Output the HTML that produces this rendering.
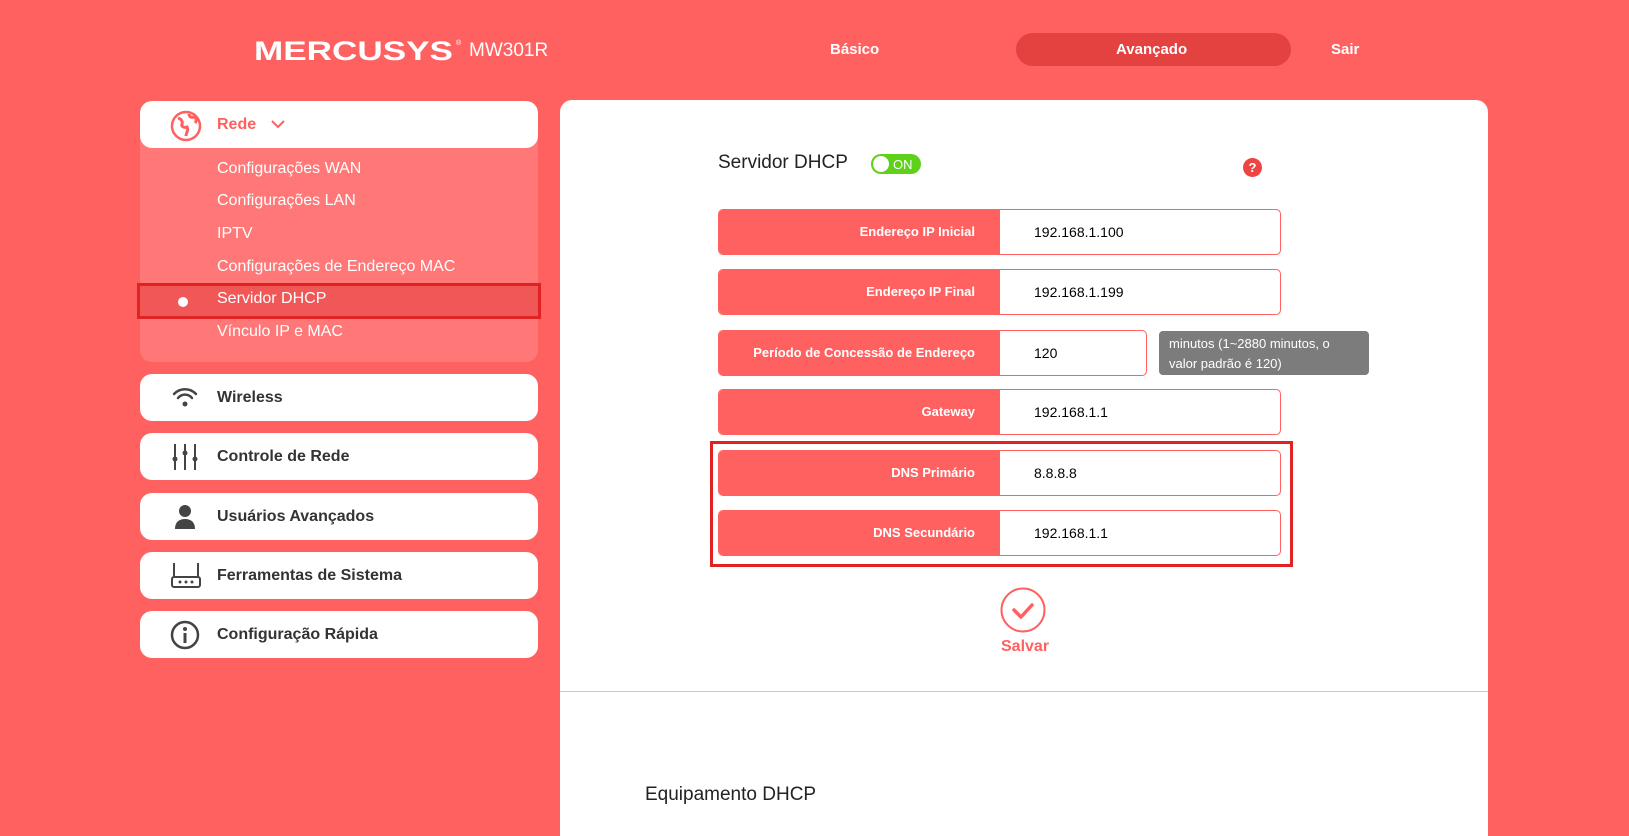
<!DOCTYPE html>
<html><head><meta charset="utf-8">
<style>
*{margin:0;padding:0;box-sizing:border-box}
html{width:1629px;height:836px;overflow:hidden}
body{width:1629px;height:836px;overflow:hidden;background:#ff6161;font-family:"Liberation Sans",Arial,sans-serif;position:relative}
.abs{position:absolute}
.logo{left:254px;top:36px;font-size:27px;font-weight:900;color:#fff;transform:scaleX(1.3);transform-origin:left;font-family:"Liberation Sans",sans-serif}
.model{left:469px;top:40px;font-size:19px;color:#fff}
.nav{color:#fff;font-weight:bold;font-size:15px;top:41px}
.pill{left:1016px;top:33px;width:275px;height:33px;border-radius:17px;background:#e44141}
.card{background:#fff;border-radius:12px;left:140px;width:398px;height:47px}
.card span{position:absolute;left:77px;top:15px;font-size:16px;font-weight:bold;color:#333}
.card svg{position:absolute;left:30px;top:9px}
.sub{left:140px;top:130px;width:398px;height:232px;background:#ff7777;border-radius:0 0 12px 12px}
.si{left:217px;font-size:16px;color:#fff}
.main{left:560px;top:100px;width:928px;height:736px;background:#fff;border-radius:12px 12px 0 0}
.row{left:718px;width:563px;height:46px;border:1px solid #ff6161;border-radius:5px;overflow:hidden;background:#fff}
.row .lb{position:absolute;left:0;top:0;width:281px;height:100%;background:#ff6161;color:#fff;font-weight:bold;font-size:13px;text-align:right;padding-right:25px;line-height:44px}
.row .v{position:absolute;left:315px;top:0;line-height:44px;font-size:14px;color:#000}
</style></head><body>
<div class="abs logo">MERCUSYS</div>
<div class="abs" style="left:456px;top:40px;color:#fff;font-size:7px">®</div>
<div class="abs model">MW301R</div>
<div class="abs nav" style="left:830px">Básico</div>
<div class="abs pill"></div>
<div class="abs nav" style="left:1116px">Avançado</div>
<div class="abs nav" style="left:1331px">Sair</div>

<div class="abs sub"></div>
<div class="abs card" style="top:101px;height:47px">
<svg width="32" height="32" viewBox="0 0 32 32"><circle cx="16" cy="16" r="14" fill="none" stroke="#ff6161" stroke-width="2.5"/><path d="M8 8c3 1 5 3 4 6s3 4 5 3c2 3-1 6-1 9M19 4c0 3 3 4 5 3s3 4 1 6" fill="none" stroke="#ff6161" stroke-width="3"/></svg>
<span style="color:#ff6161">Rede</span>
<svg style="left:130px;top:17px" width="16" height="12" viewBox="0 0 16 12"><path d="M2 3l6 6 6-6" fill="none" stroke="#ff6161" stroke-width="2"/></svg>
</div>
<div class="abs si" style="top:160px">Configurações WAN</div>
<div class="abs si" style="top:192px">Configurações LAN</div>
<div class="abs si" style="top:225px">IPTV</div>
<div class="abs si" style="top:258px">Configurações de Endereço MAC</div>
<div class="abs" style="left:137px;top:283px;width:404px;height:36px;background:#f05858;border:3px solid #e02222"></div>
<div class="abs" style="left:178px;top:297px;width:10px;height:10px;border-radius:50%;background:#fff"></div>
<div class="abs si" style="top:290px">Servidor DHCP</div>
<div class="abs si" style="top:323px">Vínculo IP e MAC</div>

<div class="abs card" style="top:374px"><svg width="30" height="30" viewBox="0 0 30 30"><path d="M4 11a15 15 0 0 1 22 0M8 15a9 9 0 0 1 14 0" fill="none" stroke="#444" stroke-width="2.5" stroke-linecap="round"/><circle cx="15" cy="21" r="2.5" fill="#444"/></svg><span>Wireless</span></div>
<div class="abs card" style="top:433px"><svg width="30" height="30" viewBox="0 0 30 30"><path d="M5 2v26M15 2v26M25 2v26" stroke="#444" stroke-width="2"/><circle cx="5" cy="17" r="2.5" fill="#444"/><circle cx="15" cy="11" r="2.5" fill="#444"/><circle cx="25" cy="17" r="2.5" fill="#444"/></svg><span>Controle de Rede</span></div>
<div class="abs card" style="top:493px"><svg width="30" height="30" viewBox="0 0 30 30"><circle cx="15" cy="9" r="6" fill="#444"/><path d="M5 27c0-7 4-10 10-10s10 3 10 10z" fill="#444"/></svg><span>Usuários Avançados</span></div>
<div class="abs card" style="top:552px"><svg width="32" height="30" viewBox="0 0 32 30"><path d="M4 2v14M28 2v14" stroke="#444" stroke-width="2"/><rect x="2" y="16" width="28" height="10" rx="2" fill="none" stroke="#444" stroke-width="2"/><circle cx="10" cy="21" r="1.5" fill="#444"/><circle cx="16" cy="21" r="1.5" fill="#444"/><circle cx="22" cy="21" r="1.5" fill="#444"/></svg><span>Ferramentas de Sistema</span></div>
<div class="abs card" style="top:611px"><svg width="30" height="30" viewBox="0 0 30 30"><circle cx="15" cy="15" r="13" fill="none" stroke="#444" stroke-width="2.5"/><circle cx="15" cy="9" r="2" fill="#444"/><rect x="13.5" y="13" width="3" height="10" fill="#444"/></svg><span>Configuração Rápida</span></div>

<div class="abs main"></div>
<div class="abs" style="left:718px;top:152px;font-size:19px;color:#222">Servidor DHCP</div>
<div class="abs" style="left:871px;top:154px;width:50px;height:20px;border-radius:10px;background:#5fd118"></div>
<div class="abs" style="left:873px;top:156px;width:16px;height:16px;border-radius:50%;background:#fff"></div>
<div class="abs" style="left:893px;top:157px;font-size:13px;color:#fff">ON</div>
<div class="abs" style="left:1243px;top:158px;width:19px;height:19px;border-radius:50%;background:#ee4444;color:#fff;font-size:13px;font-weight:bold;text-align:center;line-height:19px">?</div>

<div class="abs row" style="top:209px"><div class="lb">Endereço IP Inicial</div><div class="v">192.168.1.100</div></div>
<div class="abs row" style="top:269px"><div class="lb">Endereço IP Final</div><div class="v">192.168.1.199</div></div>
<div class="abs row" style="top:330px;width:429px"><div class="lb">Período de Concessão de Endereço</div><div class="v">120</div></div>
<div class="abs" style="left:1159px;top:331px;width:210px;height:44px;background:#7c7c7c;border-radius:4px;color:#fff;font-size:13px;padding:3px 10px;line-height:20px">minutos (1~2880 minutos, o valor padrão é 120)</div>
<div class="abs row" style="top:389px"><div class="lb">Gateway</div><div class="v">192.168.1.1</div></div>
<div class="abs" style="left:710px;top:441px;width:583px;height:126px;border:3px solid #e02222"></div>
<div class="abs row" style="top:450px"><div class="lb">DNS Primário</div><div class="v">8.8.8.8</div></div>
<div class="abs row" style="top:510px"><div class="lb">DNS Secundário</div><div class="v">192.168.1.1</div></div>

<svg class="abs" style="left:1000px;top:587px" width="46" height="46" viewBox="0 0 46 46"><circle cx="23" cy="23" r="21.5" fill="none" stroke="#ff6161" stroke-width="2"/><path d="M14 23l7 7 11-12" fill="none" stroke="#ff6161" stroke-width="3.5" stroke-linecap="round" stroke-linejoin="round"/></svg>
<div class="abs" style="left:1001px;top:638px;font-size:16px;font-weight:bold;color:#ff6161">Salvar</div>
<div class="abs" style="left:560px;top:691px;width:928px;height:1px;background:#ffb0b0"></div>
<div class="abs" style="left:645px;top:784px;font-size:19px;color:#222">Equipamento DHCP</div>
</body></html>
